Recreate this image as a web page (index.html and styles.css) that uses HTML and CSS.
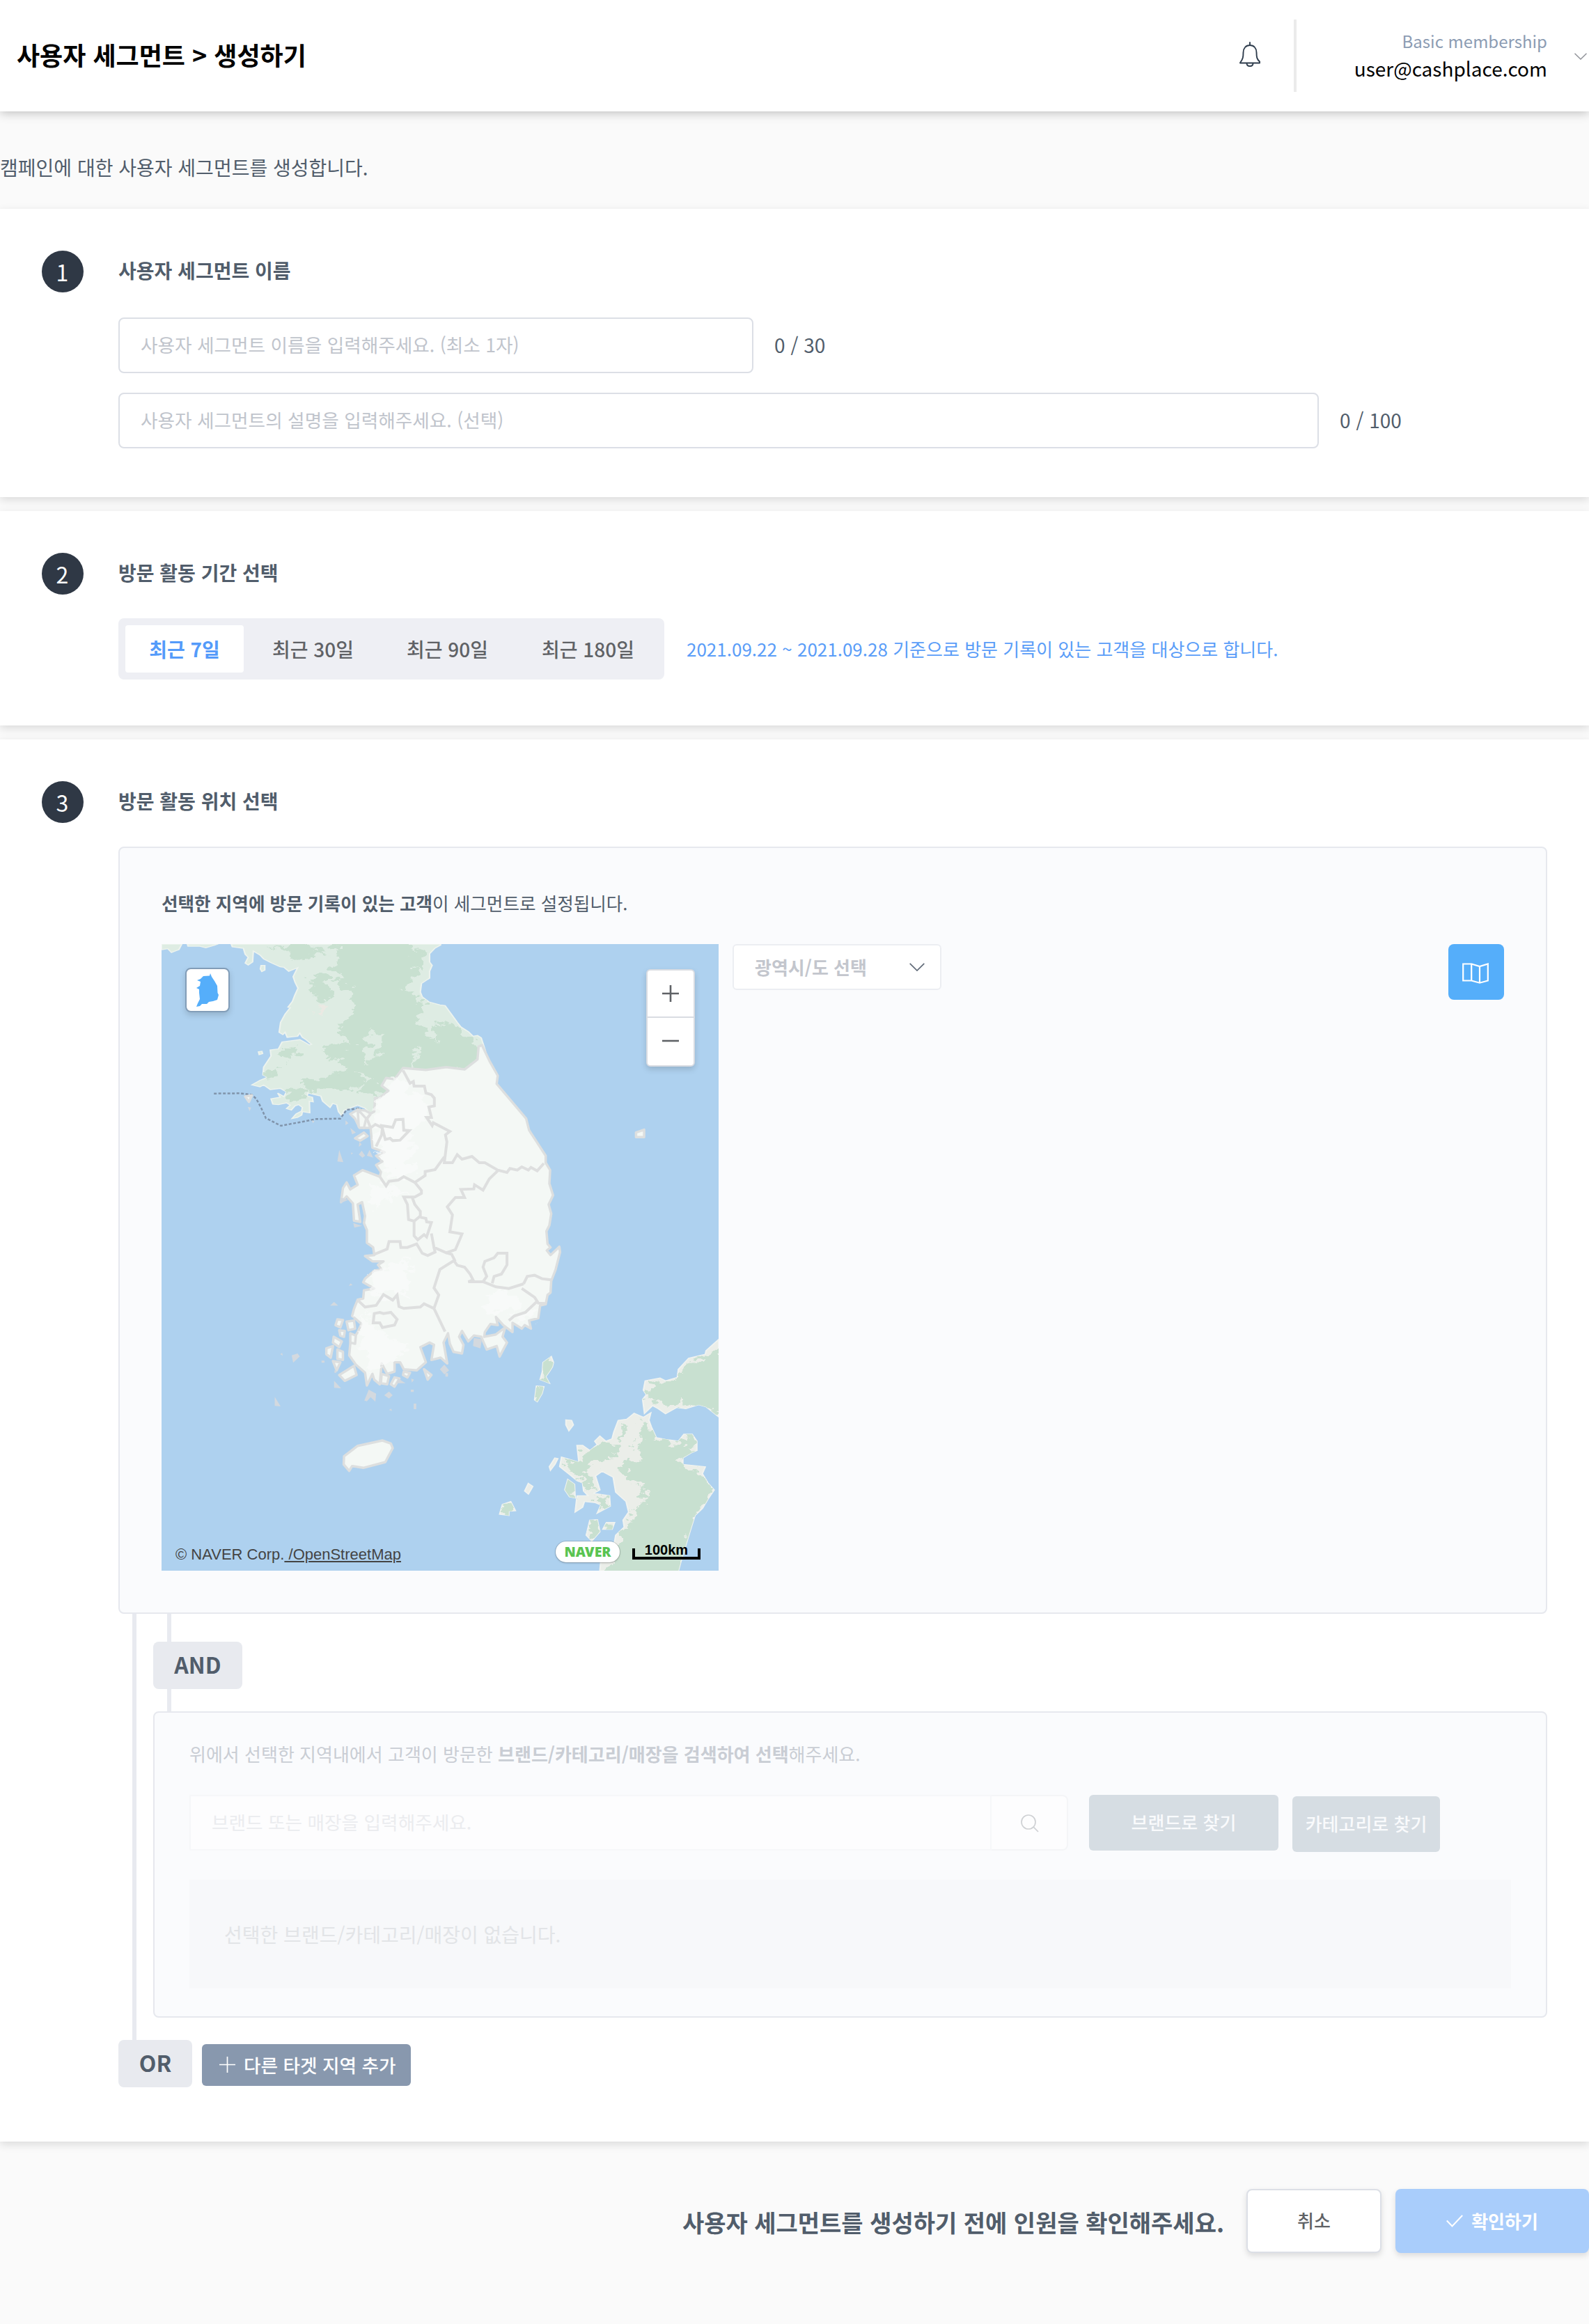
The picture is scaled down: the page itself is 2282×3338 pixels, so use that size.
FILE: index.html
```html
<!DOCTYPE html>
<html lang="ko">
<head>
<meta charset="utf-8">
<title>사용자 세그먼트 &gt; 생성하기</title>
<link rel="stylesheet" href="styles.css">
</head>
<body>
<header class="topbar">
  <h1 class="topbar-title"><span>사용자 세그먼트 &gt; 생성하기</span></h1>
  <svg class="bell" viewBox="0 0 30 36" fill="none" stroke="#2f3d4d" stroke-width="1.9" stroke-linecap="round" stroke-linejoin="round"><path d="M15 1v4M1 30C5 25 5.500 22 5.500 15.500C5.500 9.500 9 5 15 5s9.500 4.500 9.500 10.500C24.500 22 25 25 29 28.500V30.500H1ZM10.500 31c0 2.500 2 4 4.500 4s4.500-1.500 4.500-4"/></svg>
  <div class="divider"></div>
  <div class="account">
    <div class="plan"><span>Basic membership</span></div>
    <div class="email"><span>user@cashplace.com</span></div>
  </div>
  <svg class="chev" viewBox="0 0 18 10" fill="none" stroke="#909399" stroke-width="1.5"><path d="M.5.8 9 9 17.500.8"/></svg>
</header>

<p class="intro"><span>캠페인에 대한 사용자 세그먼트를 생성합니다.</span></p>

<section class="card card-name">
  <div class="step">1</div>
  <div class="body">
    <h2><span>사용자 세그먼트 이름</span></h2>
    <div class="row"><div class="field field-name"><span>사용자 세그먼트 이름을 입력해주세요. (최소 1자)</span></div><span class="count">0 / 30</span></div>
    <div class="row"><div class="field field-desc"><span>사용자 세그먼트의 설명을 입력해주세요. (선택)</span></div><span class="count">0 / 100</span></div>
  </div>
</section>

<section class="card card-period">
  <div class="step">2</div>
  <div class="body">
    <h2><span>방문 활동 기간 선택</span></h2>
    <div class="period">
      <div class="tabs">
        <div class="tab tab-on"><span>최근 7일</span></div>
        <div class="tab tab-2"><span>최근 30일</span></div>
        <div class="tab tab-2"><span>최근 90일</span></div>
        <div class="tab tab-3"><span>최근 180일</span></div>
      </div>
      <span class="note">2021.09.22 ~ 2021.09.28 기준으로 방문 기록이 있는 고객을 대상으로 합니다.</span>
    </div>
  </div>
</section>

<section class="card card-place">
  <div class="step">3</div>
  <div class="body">
    <h2><span>방문 활동 위치 선택</span></h2>
    <div class="panel region">
      <p class="lead"><span><b>선택한 지역에 방문 기록이 있는 고객</b>이 세그먼트로 설정됩니다.</span></p>
      <div class="region-row">
        <div class="map">
          <svg class="map-art" viewBox="23 48 1511 2700" preserveAspectRatio="none">
            <defs>
              <filter id="soft" x="-10%" y="-10%" width="120%" height="120%"><feTurbulence type="fractalNoise" baseFrequency="0.03" numOctaves="5" seed="4"/><feDisplacementMap in="SourceGraphic" scale="75" xChannelSelector="R" yChannelSelector="G"/><feGaussianBlur stdDeviation="1.2"/></filter>
              <path id="north" d="M23 48V72L40 68 50 84 70 72 78 48ZM93 48 95 57 125 57 143 64 168 52 175 48ZM212 48 215 60 245 66 250 92 258 105 250 130 258 138 270 125 272 78 290 95 300 112 320 128 345 146 355 148 368 165 392 150 380 188 385 212 393 238 384 270 378 295 366 320 372 322 358 350 346 385 342 428 352 438 358 428 364 450 392 445 398 432 405 450 415 460 430 480 424 483 412 472 398 460 350 470 340 500 318 504 320 530 300 578 298 612 310 622 290 635 268 655 290 663 300 655 318 675 345 670 362 685 355 705 338 690 345 708 320 715 325 738 340 740 362 732 372 742 362 757 375 763 385 745 395 740 405 752 403 767 388 780 377 800 392 795 403 785 405 770 425 775 424 725 434 728 432 708 418 702 420 690 455 703 460 725 480 752 487 735 498 740 503 770 512 788 518 765 555 742 575 755 590 778 640 780 800 650 895 520 902 510 890 452 880 442 868 445 855 425 835 405 825 385 810 352 792 313 778 310 748 297 730 275 725 255 728 218 745 200 750 195 750 165 757 140 750 125 750 90 765 65 780 52 780 48ZM293 140 303 140 303 160 295 166 291 155ZM286 512 295 510 297 520 288 524Z"/>
              <path id="japan" d="M1080 1825 1086 1850 1083 1870 1075 1890 1065 1912 1075 1940 1050 1925 1056 1890 1058 1850ZM1040 1952 1060 1955 1055 1985 1042 2020 1035 2012ZM1534 1752 1500 1800 1498 1815 1453 1832 1425 1880 1422 1915 1390 1930 1375 1918 1335 1930 1330 1970 1338 1990 1328 2010 1333 2070 1355 2037 1370 2050 1390 2072 1420 2045 1445 2050 1480 2033 1500 2042 1534 2085ZM1350 2068 1330 2087 1305 2070 1285 2095 1262 2100 1250 2150 1245 2180 1228 2190 1212 2168 1198 2190 1205 2205 1185 2230 1165 2208 1150 2208 1155 2280 1108 2258 1103 2300 1135 2340 1150 2360 1165 2370 1168 2405 1180 2425 1150 2425 1145 2495 1165 2475 1170 2450 1200 2455 1215 2465 1205 2500 1240 2470 1238 2425 1195 2415 1212 2400 1200 2340 1218 2320 1248 2345 1255 2410 1283 2450 1290 2495 1275 2530 1278 2560 1255 2595 1250 2640 1215 2700 1212 2748 1425 2748 1435 2690 1460 2560 1470 2510 1490 2480 1505 2440 1522 2400 1505 2370 1490 2330 1498 2300 1437 2290 1437 2262 1460 2240 1475 2230 1475 2190 1462 2160 1440 2160 1425 2190 1390 2182 1365 2175 1352 2130 1345 2100ZM1120 2098 1135 2100 1140 2120 1128 2145 1120 2120ZM1090 2262 1098 2265 1090 2290 1078 2315 1075 2300ZM1125 2355 1143 2375 1145 2435 1130 2430 1117 2400ZM1018 2372 1030 2385 1018 2418 1008 2405ZM970 2450 983 2490 965 2492 965 2510 940 2505 948 2462ZM1185 2530 1205 2528 1212 2580 1190 2620 1175 2595ZM1230 2540 1252 2540 1245 2570 1220 2570Z"/>
              <clipPath id="clip-north"><use href="#north"/></clipPath>
              <clipPath id="clip-japan"><use href="#japan"/></clipPath>
            </defs>
            <rect x="23" y="48" width="1511" height="2700" fill="#aed1ef"/>
            <use href="#north" fill="#deece3" stroke="#edf3ee" stroke-width="4"/>
            <g clip-path="url(#clip-north)"><g filter="url(#soft)" fill="#c8e0d0">
              <path d="M490 30H700L710 180 680 240 730 280 725 400 770 470 760 400 800 380 860 450 900 500 870 600 700 600 620 670 600 710 560 680 590 620 540 600 480 620 520 560 450 510 500 480 540 490 500 430 520 370 560 330 540 250 490 200 500 120Z"/>
              <path d="M440 170 470 190 480 290 450 310 430 250ZM350 500 390 490 400 530 360 560ZM300 590 340 580 340 610 310 620ZM400 640 540 600 590 650 520 670 430 690ZM360 680 420 670 400 720 370 720ZM320 60 420 50 470 90 400 120 370 80ZM715 60 740 90 730 160 700 120Z"/>
              <path fill="#deece3" d="M600 420 620 430 610 510 590 560 570 510ZM715 500 725 500 715 570 700 580ZM735 340 750 350 745 400 735 400Z"/>
              <ellipse cx="449" cy="342" rx="14" ry="18" fill="#ebe9e3"/>
            </g></g>
            <use href="#japan" fill="#ebeee9" stroke="#f0f3f0" stroke-width="4"/>
            <g clip-path="url(#clip-japan)"><g filter="url(#soft)" fill="#c8e0d0">
              <path d="M1550 1750 1500 1820 1460 1840 1430 1890 1430 1925 1345 1935 1340 2020 1400 2040 1430 2000 1440 2035 1500 2045 1550 2090ZM1050 1820H1090V1940H1050ZM1030 1950H1065V2020H1030Z"/>
              <path d="M1270 2110 1285 2130 1290 2180 1270 2200ZM1320 2100 1345 2110 1365 2180 1430 2210 1440 2160 1480 2170 1470 2230 1430 2260 1430 2290 1480 2320 1500 2360 1520 2400 1460 2560 1430 2770H1220L1270 2600 1310 2500 1335 2420 1325 2370 1290 2350 1270 2300 1280 2280 1330 2270 1300 2210 1320 2160ZM1170 2230 1240 2190 1265 2230 1240 2270 1190 2280 1180 2340 1200 2410 1180 2410 1150 2330 1110 2290 1120 2265 1160 2280ZM1110 2355H1150V2440H1110ZM1205 2425H1235V2490H1205ZM1175 2530H1215V2620H1175ZM1215 2540H1255V2570H1215ZM935 2450H990V2510H935Z"/>
            </g></g>
            <path class="sea-line" d="M165 692 235 691 268 697 280 715 292 750 306 798 347 831 442 802 508 800 525 762 557 756 582 772"/>
            <g class="south">
              <path d="M892 483 900 510 912 550 935 615 932 650 1012 800 1020 850 1065 960 1065 990 1077 1022 1075 1080 1085 1130 1073 1170 1080 1210 1075 1260 1067 1285 1070 1340 1078 1355 1068 1368 1078 1388 1102 1352 1104 1375 1092 1450 1080 1500 1078 1550 1070 1560 1065 1600 1050 1605 1045 1660 1020 1670 1025 1705 1008 1690 1000 1705 975 1680 975 1720 950 1690 930 1655 935 1690 915 1685 900 1720 898 1740 930 1730 955 1700 948 1740 960 1765 940 1825 932 1780 905 1795 890 1740 870 1735 855 1760 838 1715 830 1740 842 1775 838 1812 815 1805 805 1770 800 1725 788 1765 798 1855 780 1830 755 1840 762 1775 750 1765 725 1785 740 1850 715 1885 680 1880 670 1850 655 1850 655 1890 635 1900 620 1855 615 1945 600 1925 595 1900 580 1950 575 1895 550 1860 532 1820 535 1770 555 1720 565 1685 540 1650 545 1620 555 1580 570 1575 572 1540 600 1532 570 1505 575 1490 600 1455 620 1450 610 1430 625 1415 595 1415 575 1392 600 1388 597 1355 580 1335 580 1280 572 1250 575 1220 567 1160 555 1170 562 1245 545 1240 542 1165 525 1135 510 1160 515 1100 525 1075 535 1105 555 1085 545 1045 568 1022 615 1050 618 1030 605 1000 622 985 605 960 628 945 595 925 590 840 560 840 548 800 535 780 555 762 575 765 590 778 600 770 602 712 615 710 638 680 620 658 632 625 655 630 678 582 740 590 795 578 845 588 880 545 883 490Z"/>
              <path d="M518 2255 555 2210 622 2187 645 2200 650 2220 630 2280 570 2305 540 2297 532 2318 517 2290ZM545 1865 552 1905 520 1930 505 1905ZM500 1665 515 1668 508 1700 495 1690ZM525 1675 545 1670 548 1705 530 1712ZM505 1712 520 1715 518 1740 508 1735ZM490 1740 512 1760 505 1785 488 1765ZM535 1725 550 1735 548 1770 535 1765ZM470 1790 488 1780 482 1830 470 1815ZM500 1795 515 1805 515 1840 500 1835ZM488 1845 508 1850 498 1885ZM620 1900 640 1910 635 1945 618 1940ZM655 1915 668 1920 655 1955 645 1945ZM680 1890 697 1895 690 1915 678 1905ZM735 1880 755 1905 745 1925ZM555 760 578 800 572 840 558 835ZM548 885 572 860 582 875 562 895ZM250 705 268 700 260 728ZM1310 860 1332 848 1332 880 1310 880Z"/>
            </g>
            <g class="lowland"><path d="M605 720 660 640 680 620 700 700 740 700 745 790 700 850 700 1040 640 1060 615 950 600 880ZM575 1080 640 1080 700 1130 640 1130 600 1200ZM585 1460 700 1400 690 1560 660 1540 600 1590ZM565 1640 600 1700 700 1790 640 1850 590 1890 560 1760ZM905 1560 960 1540 1000 1600 940 1640 900 1620ZM980 1650 1040 1620 1035 1660 1000 1680Z" filter="url(#soft)"/></g>
            <path class="islets" d="M257 750 266 752 262 768ZM500 985 505 935 516 988ZM538 945 542 950 537 955ZM535 840 550 860 540 868ZM560 900 566 912 558 922ZM558 955 566 938 575 960 568 968ZM580 960 587 935 597 968ZM508 1140 530 1150 508 1165ZM543 1250 567 1262 546 1270ZM480 1606 491 1590 502 1606ZM531 1520 536 1510 541 1518ZM345 1815 350 1810 352 1822ZM376 1820 392 1812 398 1825 380 1852ZM457 1843 465 1843 465 1852 457 1852ZM492 1885 497 1885 497 1895 492 1895ZM491 1930 510 1962 491 1960ZM330 1999 346 2040 330 2038ZM573 2015 585 1968 605 1985 603 2020 590 2000 580 2018ZM627 1992 640 1976 650 1992 640 2006ZM699 1968 707 1968 707 1978 699 1978ZM707 2028 714 2028 714 2052 707 2052ZM640 2055 646 2050 648 2060ZM665 1920 685 1940 660 1940ZM778 1880 790 1860 803 1885 790 1902ZM793 1897 800 1897 800 1912 793 1912ZM700 1920 708 1925 702 1937ZM870 1745 892 1750 888 1790 868 1780ZM430 808 438 810 434 820ZM522 808 530 820 522 828Z"/>
            <g class="borders">
              <path d="M678 592 697 648 706 640 708 660 736 660 740 690 755 697 763 712 763 745 748 750 755 795 742 795 757 830 760 818 805 855 793 870 797 900 790 990 812 990 825 955 838 975 865 963 885 990 900 990 935 1022 960 1032 968 1015 988 1022 1000 1008 1018 1022 1025 1010 1042 1025 1060 993"/>
              <path d="M615 1050 632 1090 640 1070 665 1065 680 1050 710 1075 738 1045 738 1028 765 1020 790 965M710 1075 728 1110 728 1122 710 1138 680 1138 690 1170 693 1235 708 1242 725 1220 725 1200 710 1170 703 1140M708 1242 708 1305 718 1322 735 1300 742 1310 755 1248 742 1245 740 1230 725 1225M755 1295 762 1355 795 1378 820 1365 832 1320 838 1297 805 1288 812 1215 798 1180 820 1140 845 1140 835 1105 870 1103 872 1085 895 1108 912 1060 935 1025"/>
              <path d="M600 1385 635 1362 640 1330 670 1330 672 1355 690 1355 715 1340 730 1380 745 1390 765 1375 762 1355M795 1378 810 1385 818 1410 778 1450 762 1530 775 1560 762 1618 792 1718M815 1410 825 1432 845 1440 860 1470 868 1495 855 1503 895 1503 930 1525 965 1532 1005 1512M895 1503 905 1480 895 1440 900 1415 925 1400 935 1380 960 1380 960 1430 945 1470 925 1480 920 1510"/>
              <path d="M1005 1512 1015 1480 1035 1475 1055 1490 1080 1495M1000 1532 1035 1570 1045 1595 1065 1597M1040 1590 1010 1635 980 1650 965 1670M557 1585 575 1612 605 1605 625 1558 650 1582 662 1560 667 1610 680 1618 725 1612 735 1598 762 1618M597 1680 600 1640 615 1635 625 1640 645 1635 662 1665 655 1690 622 1700 615 1680ZM620 830 650 838 658 805 678 803 680 850 695 852 670 893 650 895 643 885 630 890ZM590 840 603 825 622 840 620 870 605 920M590 780 580 800 590 840"/>
            </g>
          </svg>
          <div class="fit"><svg viewBox="0 0 32 48" preserveAspectRatio="none"><path fill="#55aefa" d="M20 0 22 5 26 11 30 18 30.500 28 32 31 30 38 24 40 18 41 15 44 8 44 5 47 0 48 2 43 5 37 4 28 4 23 0 21 5 18 6 12 1 10 6 8 10 4 19 3.500Z"/></svg></div>
          <div class="zoomer"><div><svg viewBox="0 0 24 24"><path d="M0 12h24M12 0v24" stroke="#5f6266" stroke-width="2.600"/></svg></div><div><svg viewBox="0 0 24 24"><path d="M0 12h24" stroke="#5f6266" stroke-width="2.600"/></svg></div></div>
          <div class="copy"><span>© NAVER Corp.<u> /OpenStreetMap</u></span></div>
          <div class="naver"><span>NAVER</span></div>
          <div class="scale"><span>100km</span></div>
        </div>
        <div class="select"><span>광역시/도 선택</span><svg viewBox="0 0 22 12" fill="none" stroke="#606a78" stroke-width="1.700"><path d="M.7.8 11 11 21.300.8"/></svg></div>
        <div class="map-btn"><svg viewBox="0 0 38 30" fill="none" stroke="#fff" stroke-width="2.200"><path d="M1.200 1.500h12V25.500h-12ZM13.200 1.500 25 5 36.800 1.500V25.500L25 28.700 13.200 25.500M25 5V28.700"/></svg></div>
      </div>
    </div>
    <div class="tree">
      <div class="and-line"><div class="badge badge-and"><span>AND</span></div></div>
      <div class="panel brand">
        <p class="lead lead-off"><span>위에서 선택한 지역내에서 고객이 방문한 <b>브랜드/카테고리/매장을 검색하여 선택</b>해주세요.</span></p>
        <div class="search-row">
          <div class="search-in"><span>브랜드 또는 매장을 입력해주세요.</span></div>
          <div class="search-btn"><svg viewBox="0 0 26 26" fill="none" stroke="#cfd1d4" stroke-width="1.700"><circle cx="11" cy="11" r="10"/><path d="M18.200 18.200 25 25"/></svg></div>
          <div class="off-btn off-brand"><span>브랜드로 찾기</span></div>
          <div class="off-btn off-cat"><span>카테고리로 찾기</span></div>
        </div>
        <div class="empty"><span>선택한 브랜드/카테고리/매장이 없습니다.</span></div>
      </div>
    </div>
    <div class="or-row">
      <div class="badge badge-or"><span>OR</span></div>
      <div class="add"><svg viewBox="0 0 23 23" stroke="#fff" stroke-width="1.700"><path d="M0 11.500h23M11.500 0v23"/></svg><span>다른 타겟 지역 추가</span></div>
    </div>
  </div>
</section>

<footer class="actions">
  <span class="warn">사용자 세그먼트를 생성하기 전에 인원을 확인해주세요.</span>
  <div class="btn cancel"><span>취소</span></div>
  <div class="btn confirm"><svg viewBox="0 0 24 18" fill="none" stroke="#fff" stroke-width="2"><path d="M.8 8.500 8.500 16.500 23.200 1"/></svg><span>확인하기</span></div>
</footer>
</body>
</html>
```
FILE: styles.css
```css
* { box-sizing: border-box; }
body { margin: 0; width: 2282px; height: 3338px; overflow: hidden; background: #fafafa; color: #515d6b; font: 28px/1.4 "Noto Sans CJK KR", "Noto Sans", sans-serif; }
h1, h2, p { margin: 0; }
svg { display: block; }
span { white-space: nowrap; }
b { font-weight: 700; }

.topbar { position: relative; z-index: 2; display: flex; align-items: center; height: 160px; padding-left: 24px; background: #fff; box-shadow: 0 2px 14px rgba(0, 0, 0, .25); }
.topbar-title { flex: 1; padding-bottom: 4px; font-size: 36px; line-height: 52px; font-weight: 700; color: #000; }
.bell { width: 30px; height: 36px; margin: 0 48px 4px 0; }
.divider { width: 4px; height: 104px; background: #ebebeb; }
.account { width: 360px; padding-bottom: 2px; text-align: right; }
.plan { font-size: 24px; line-height: 38px; color: #8c9cb3; }
.email { font-size: 28px; line-height: 40px; color: #000; }
.chev { width: 18px; height: 10px; margin: 2px 3px 0 39px; }

.intro { height: 140px; padding-top: 60px; line-height: 40px; }

.card { display: flex; padding: 60px; background: #fff; box-shadow: 0 4px 12px rgba(0, 0, 0, .13); margin-bottom: 20px; }
.card-name { height: 414px; }
.card-period { height: 308px; }
.card-place { height: 2014px; margin-bottom: 0; }
.step { width: 60px; height: 60px; padding-right: 1px; border-radius: 50%; background: #2f3845; color: #fff; font-size: 32px; line-height: 60px; text-align: center; }
.body { flex: 1; margin-left: 50px; }
h2 { padding-bottom: 4px; font-size: 28px; line-height: 56px; font-weight: 700; }

.row { display: flex; align-items: center; margin-top: 28px; }
h2 + .row { margin-top: 36px; }
.field { height: 80px; padding-left: 30px; border: 2px solid #dcdfe6; border-radius: 8px; line-height: 74px; font-size: 26.667px; color: #c0c4cc; }
.field-name { width: 912px; }
.field-desc { width: 1724px; }
.count { margin-left: 30px; padding-bottom: 3px; line-height: 40px; }

.period { display: flex; align-items: center; margin-top: 34px; }
.tabs { display: flex; align-items: center; width: 784px; height: 88px; padding-left: 10px; border-radius: 8px; background: #eeeff4; font-weight: 500; color: #606266; }
.tab { height: 68px; line-height: 68px; text-align: center; border-radius: 4px; }
.tab-on { width: 170px; margin-right: 3px; background: #fff; color: #549bfa; font-weight: 700; }
.tab-2 { width: 193px; }
.tab-3 { width: 211px; }
.note { margin-left: 32px; font-size: 26px; line-height: 38px; color: #5a9df8; }

.panel { border: 2px solid #e6e8ee; border-radius: 8px; background: #fafbfd; }
.region { height: 1102px; margin-top: 34px; padding: 60px; }
.lead { padding-bottom: 2px; font-size: 25.6px; line-height: 38px; }
.region-row { display: flex; align-items: flex-start; margin-top: 38px; }
.map { position: relative; width: 800px; height: 900px; overflow: hidden; }
.map-art { width: 800px; height: 900px; }
.sea-line { fill: none; stroke: #8094ab; stroke-width: 2.5px; stroke-dasharray: 4 2.5; vector-effect: non-scaling-stroke; }
.south path { fill: #f4f8f5; stroke: #dddfdf; stroke-width: 3.5px; stroke-linejoin: round; vector-effect: non-scaling-stroke; }
.lowland path { fill: #fbfcfc; opacity: .6; }
.islets { fill: #d3d9df; }
.borders path { fill: none; stroke: #dedfdf; stroke-width: 4px; vector-effect: non-scaling-stroke; }
.fit { position: absolute; left: 34px; top: 34px; width: 64px; height: 64px; padding: 6px 0 0 14px; border: 2px solid #829db8; border-radius: 8px; background: #fff; box-shadow: 0 4px 8px rgba(0, 0, 0, .15); }
.fit svg { width: 32px; height: 48px; }
.zoomer { position: absolute; left: 696px; top: 36px; width: 70px; height: 140px; border: 2px solid #d9dce2; border-radius: 6px; background: #fff; box-shadow: 0 4px 8px rgba(0, 0, 0, .15); }
.zoomer div { height: 66px; padding: 21px; }
.zoomer div + div { height: 70px; border-top: 2px solid #d9dce2; }
.zoomer svg { width: 24px; height: 24px; }
.copy { position: absolute; left: 20px; bottom: 9px; font: 22px/28px "Liberation Sans", Arial, sans-serif; color: #444; }
.naver { position: absolute; left: 566px; top: 858px; width: 92px; height: 30px; border-radius: 15px; background: #fff; box-shadow: 0 0 0 1px rgba(0, 0, 0, .12), 0 1px 3px rgba(0, 0, 0, .2); text-align: center; font: 900 19.5px/30px "Noto Sans", sans-serif; color: #5ac451; }
.scale { position: absolute; left: 676px; top: 868px; width: 98px; height: 16px; border: 4px solid #000; border-top: 0; text-align: center; font: bold 20px/1 "Liberation Sans", Arial, sans-serif; color: #000; }
.scale span { position: relative; top: -8px; display: block; }
.select { display: flex; align-items: center; justify-content: space-between; width: 300px; height: 66px; margin-left: 20px; padding: 0 22px 0 30px; border: 2px solid #eceef2; border-radius: 6px; background: #fff; font-size: 26px; font-weight: 700; color: #c3c6cd; }
.select svg { width: 22px; height: 12px; }
.map-btn { width: 80px; height: 80px; margin-left: auto; padding: 27px 0 0 20px; border-radius: 8px; background: #55aefa; }
.map-btn svg { width: 38px; height: 30px; }

.tree { margin-left: 20px; padding-left: 24px; border-left: 6px solid #e8eaf0; height: 612px; }
.and-line { height: 140px; margin-left: 20px; padding-top: 40px; border-left: 6px solid #e8eaf0; }
.badge { height: 68px; border-radius: 8px; background: #e8eaef; text-align: center; font-size: 32px; line-height: 64px; font-weight: 700; }
.badge-and { width: 128px; margin-left: -26px; }
.brand { height: 440px; padding: 40px 50px 0; }
.lead-off { padding-bottom: 4px; font-size: 26px; color: #c9cdd4; }
.search-row { display: flex; margin-top: 36px; }
.search-in { width: 1152px; height: 80px; padding-left: 30px; border: 2px solid #f6f7f9; background: #fdfdfe; font-size: 26.667px; line-height: 74px; color: #ebecef; }
.search-btn { width: 110px; height: 80px; padding: 26px 0 0 42px; border: 2px solid #f4f5f7; border-left: 0; border-radius: 0 8px 8px 0; background: #fdfdfe; }
.search-btn svg { width: 26px; height: 26px; }
.off-btn { height: 80px; border-radius: 6px; background: #d6dde3; color: #f9fafc; text-align: center; font-size: 26px; line-height: 78px; font-weight: 500; }
.off-brand { width: 272px; margin-left: 30px; }
.off-cat { width: 212px; margin: 2px 0 0 20px; }
.empty { height: 156px; margin-top: 40px; padding-left: 50px; background: #f7f8fa; line-height: 157px; color: #e2e4e7; }
.or-row { display: flex; align-items: flex-start; }
.badge-or { width: 106px; }
.add { display: flex; align-items: center; gap: 12px; width: 300px; height: 60px; margin: 6px 0 0 14px; padding: 0 0 1px 25px; border-radius: 6px; background: #8898ae; color: #fff; font-size: 26.667px; font-weight: 500; }
.add svg { width: 23px; height: 23px; }

.actions { display: flex; align-items: flex-start; justify-content: flex-end; margin-top: 68px; }
.warn { margin-right: 32px; font-size: 34px; line-height: 95px; font-weight: 700; }
.btn { height: 92px; border-radius: 8px; font-size: 26px; line-height: 90px; font-weight: 500; text-align: center; box-shadow: 0 4px 8px rgba(0, 0, 0, .12); }
.cancel { width: 194px; border: 2px solid #dcdfe6; background: #fff; color: #606266; line-height: 86px; }
.confirm { display: flex; align-items: center; justify-content: center; gap: 12px; width: 278px; margin-left: 20px; background: #a9cdfb; color: #fff; font-weight: 700; }
.confirm svg { width: 24px; height: 18px; }
```
